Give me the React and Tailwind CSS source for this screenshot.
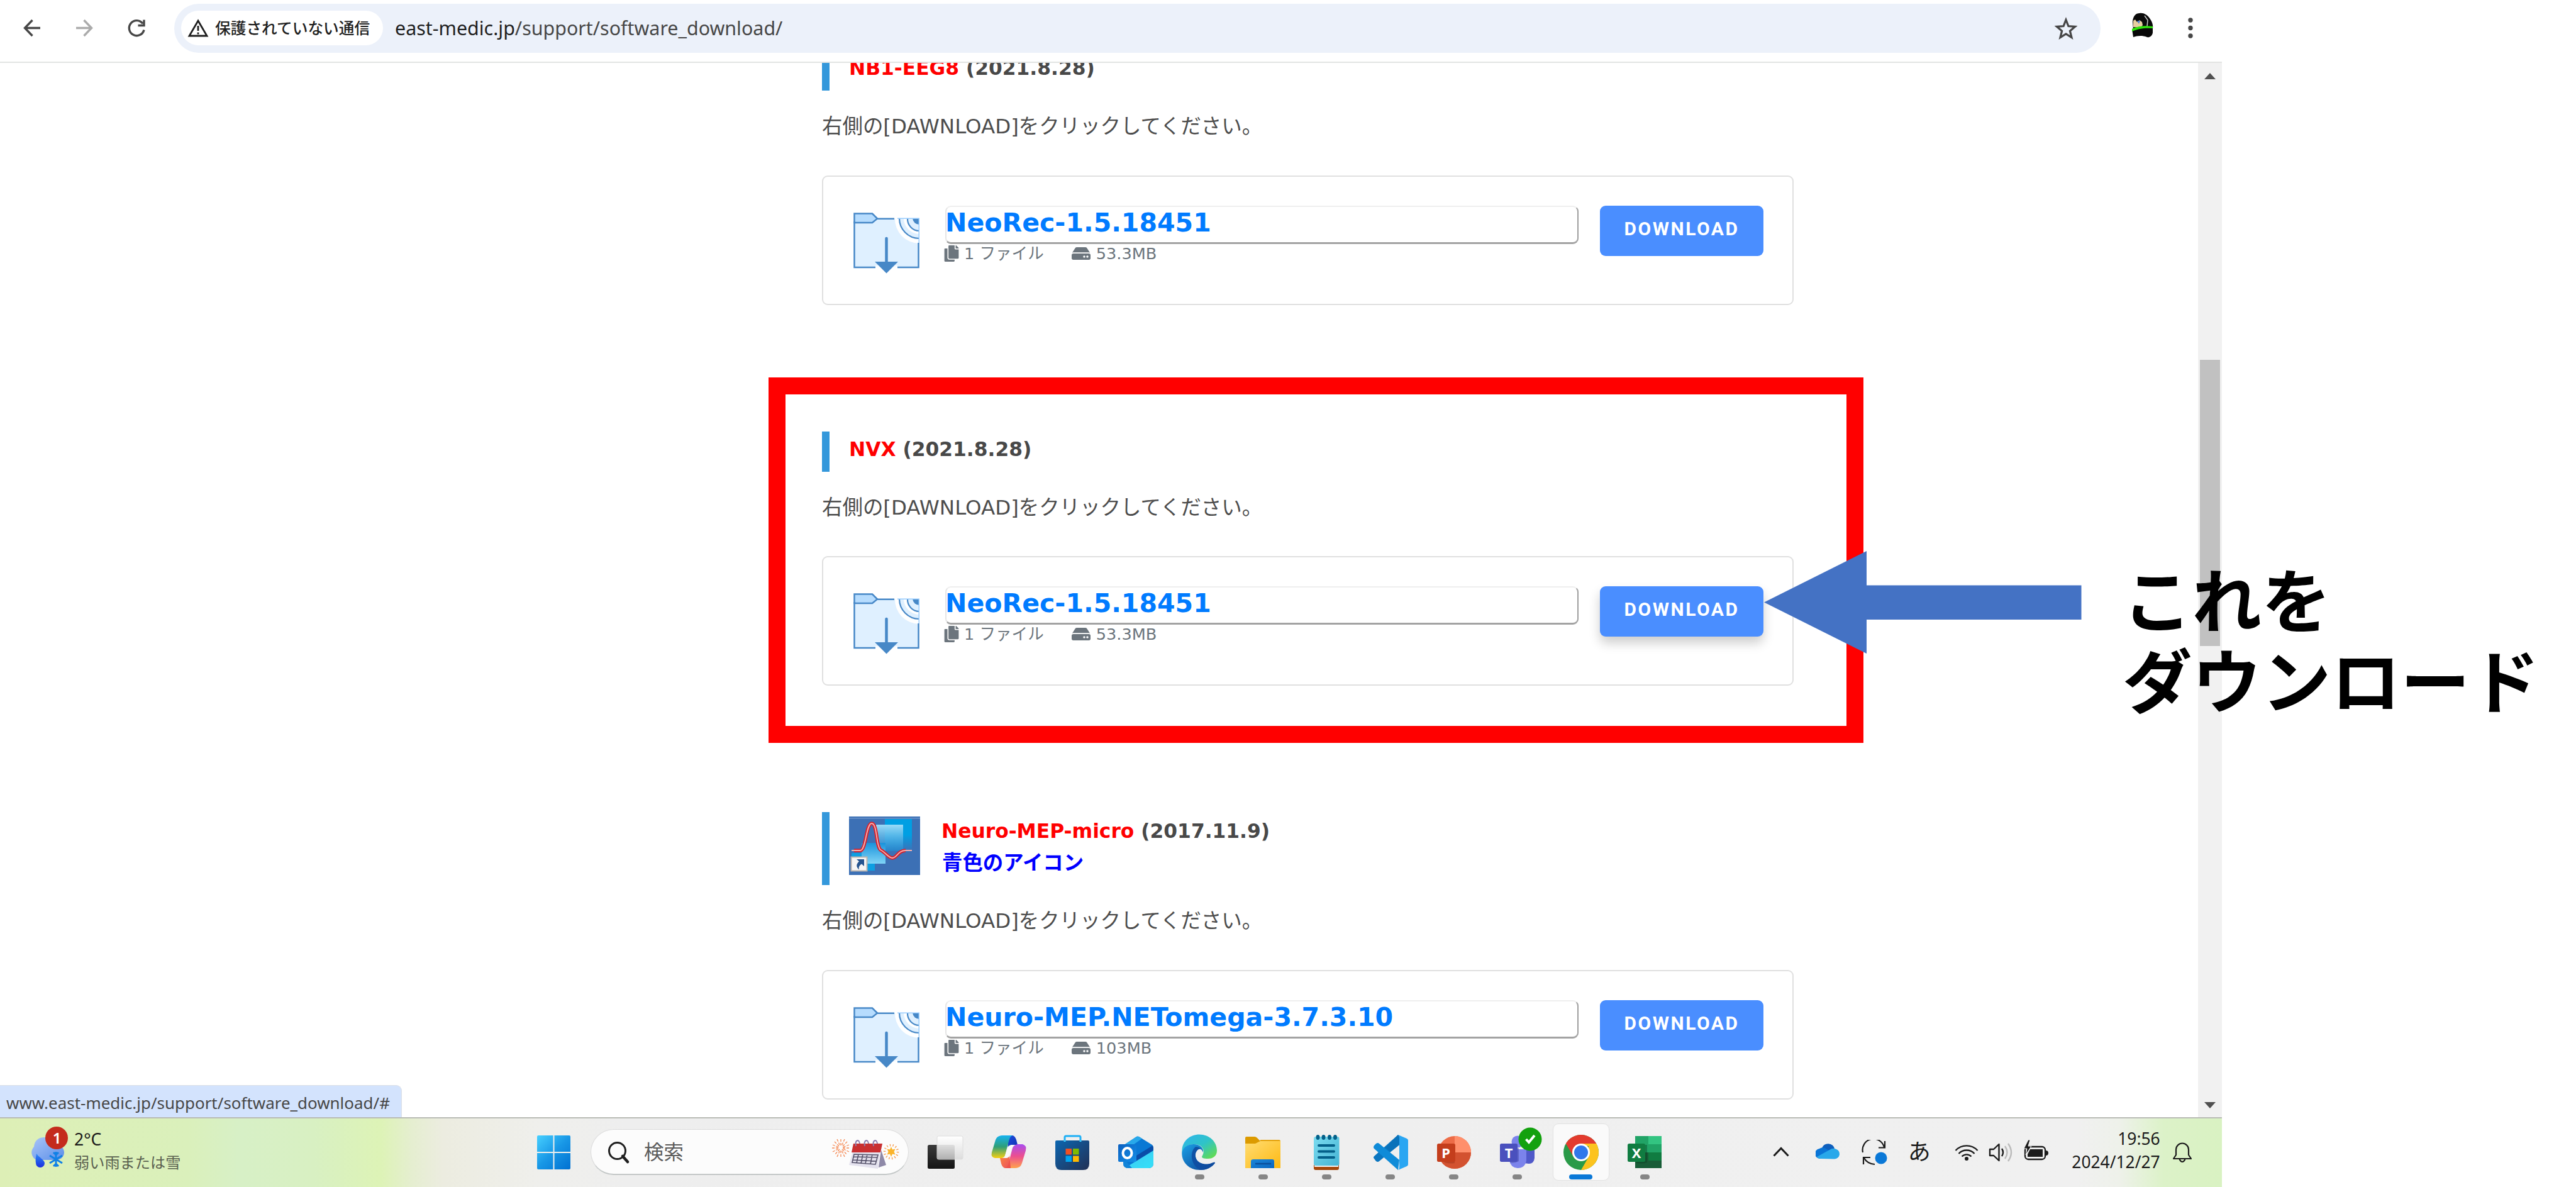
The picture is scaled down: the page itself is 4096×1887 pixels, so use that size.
import React from "react";
import { FaCopy, FaHdd } from "react-icons/fa";

const MEIRYO = "font-['DejaVu_Sans','Noto_Sans_CJK_JP',sans-serif]";
const SEGOE = "font-['Noto_Sans','Noto_Sans_CJK_JP',sans-serif]";

function FolderIcon() {
  return (
    <svg className="mt-[11px] h-[97px] w-[105px] shrink-0" viewBox="0 0 105 97" fill="none">
      <path d="M1.500 9.500H103.500V87H1.500Z" fill="#dff0ff" />
      <path d="M66 8A39 39 0 0 0 105 49V8Z" fill="#fff" />
      <path d="M73 9A32 32 0 0 0 104 41V9Z" fill="#dff0ff" />
      <path d="M80 9A25 25 0 0 0 104 34V9Z" fill="#fff" />
      <path d="M86 9A19 19 0 0 0 104 29V9Z" fill="#dff0ff" />
      <path d="M94 9A11 11 0 0 0 105 19V9Z" fill="#4788c7" />
      <path d="M73 9A32 32 0 0 0 104.500 41M86 9A19 19 0 0 0 104.500 29" stroke="#4788c7" strokeWidth="2.200" />
      <path d="M70 9.200H104.300V48" stroke="#98ccfd" strokeWidth="1.500" />
      <path d="M1.500 1.500H30L38 9.500L30 16H1.500Z" fill="#b6dcfe" stroke="#4788c7" strokeWidth="2.500" />
      <path d="M38 9.800H65M1.500 14V87H35M70 87H103.500V48" stroke="#4788c7" strokeWidth="2.500" />
      <path d="M35 84h35v7H35z" fill="#fff" opacity=".8" />
      <path d="M52.500 41V80" stroke="#4788c7" strokeWidth="4.500" strokeLinecap="round" />
      <path d="M34 78H71L52.500 96.500Z" fill="#4788c7" />
    </svg>
  );
}

function MepIcon() {
  return (
    <svg className="mt-[7px] ml-[31px] h-[93px] w-[113px] shrink-0" viewBox="0 0 113 93">
      <defs>
        <linearGradient id="mepA" x1="0" y1="0" x2="0" y2="1">
          <stop offset="0" stopColor="#9bdcf8" />
          <stop offset="1" stopColor="#1b8fd6" stopOpacity=".6" />
        </linearGradient>
        <linearGradient id="mepB" x1="0" y1="0" x2="0" y2="1">
          <stop offset="0" stopColor="#1a93dc" />
          <stop offset="1" stopColor="#7fd4f6" />
        </linearGradient>
        <linearGradient id="mepC" x1="0" y1="0" x2="0" y2="1">
          <stop offset="0" stopColor="#009fe3" />
          <stop offset=".5" stopColor="#009fe3" />
          <stop offset="1" stopColor="#3b72b8" />
        </linearGradient>
      </defs>
      <rect width="113" height="93" fill="#3c70b5" />
      <rect y="2" width="113" height="1.500" fill="#6d95cc" />
      <rect x="57" y="4" width="43" height="50" fill="url(#mepC)" />
      <rect x="4" y="58" width="37" height="28" fill="#0d9fe2" />
      <rect x="43" y="13" width="43" height="42" fill="url(#mepA)" />
      <rect x="20" y="42" width="38" height="33" fill="url(#mepB)" />
      <path d="M8 54H18C27 54 27 11 36 11C45 11 43 48 50 53C58 57 63 66 69 66C76 66 78 54 90 54" fill="none" stroke="#d6202c" strokeWidth="5.500" />
      <path d="M4 54H18C27 54 27 11 36 11C45 11 43 48 50 53C58 57 63 66 69 66C76 66 78 54 90 54H100" fill="none" stroke="#f3b0b0" strokeWidth="1.800" />
      <rect x="3.500" y="64.500" width="25" height="22" fill="#f6f6f6" stroke="#b9b3ae" strokeWidth="2" />
      <path d="M12 68h12v11l-4-3.500c-4 3-5 5-4 9c-5-4-5-9 0-13Z" fill="#25548f" />
    </svg>
  );
}

function Card({ name, size, hovered }) {
  return (
    <div className="flex h-[206px] w-[1545px] items-start rounded-[9px] border-2 border-[#e0e0e0] pt-[46px] pl-[48px]">
      <FolderIcon />
      <div className="ml-[41px] w-[1007px]">
        <div className="h-[61px] rounded-[9px] border-t-2 border-r-[2px] border-b-[3px] border-l-2 border-t-[#efefef] border-r-[#a0a0a0] border-b-[#a3a3a3] border-l-[#e6e6e6]">
          <div className="-ml-[2px] w-max text-[41.100px] leading-[51px] font-bold whitespace-nowrap text-[#007bff]">{name}</div>
        </div>
        <div className="-mt-[2px] flex items-center text-[25.600px] leading-[34px] text-[#6c757d]">
          <FaCopy className="-ml-[2px] h-[26px] w-[24px]" />
          <span className="ml-[8px] whitespace-nowrap">1 ファイル</span>
          <FaHdd className="ml-[44px] h-[30px] w-[30px]" />
          <span className="ml-[9px]">{size}</span>
        </div>
      </div>
      <div
        className={
          "ml-[34px] h-[80px] w-[260px] rounded-[9px] bg-[#4a8eff] text-center font-['Roboto',sans-serif] text-[30px] leading-[74px] font-bold tracking-[2.500px] text-white " +
          (hovered ? "shadow-[0_10px_18px_rgba(0,0,0,0.2)]" : "")
        }
      >
        DOWNLOAD
      </div>
    </div>
  );
}

function Note() {
  return (
    <div className="h-[134.500px] pt-[25px] text-[32.450px] leading-[64px] whitespace-nowrap text-[#4c4c4c]">
      右側の[DAWNLOAD]をクリックしてください。
    </div>
  );
}

function Heading({ name, date }) {
  return (
    <div className="h-[64px] border-l-[12px] border-[#3498db] pl-[31px] text-[31.300px] leading-[56px] font-bold whitespace-nowrap text-[#484848]">
      <span className="text-[#ff0000]">{name}</span> {date}
    </div>
  );
}

function Toolbar() {
  return (
    <div className="flex h-[100px] w-[3533px] items-start border-b-2 border-[#e2e4e3] bg-white">
      <svg className="mt-[28px] ml-[35px] h-[33px] w-[33px]" viewBox="0 0 33 33" fill="none" stroke="#474747" strokeWidth="3.400">
        <path d="M29 16.500H5M16.500 4L4.500 16.500L16.500 29" />
      </svg>
      <svg className="mt-[28px] ml-[49px] h-[33px] w-[33px]" viewBox="0 0 33 33" fill="none" stroke="#ababab" strokeWidth="3.400">
        <path d="M4 16.500H28M16.500 4L28.500 16.500L16.500 29" />
      </svg>
      <svg className="mt-[28px] ml-[51px] h-[33px] w-[33px]" viewBox="0 0 33 33" fill="none" stroke="#474747" strokeWidth="3.400">
        <path d="M26 9.500A12 12 0 1 0 28 19.500M28 3.500V12.500H18.500" />
      </svg>
      <div className="mt-[6px] ml-[43px] flex h-[78px] w-[3063px] items-start rounded-full bg-[#ecf1fa]">
        <div className="mt-[11px] ml-[11px] flex h-[55px] w-[321px] items-center rounded-full bg-white pl-[10px]">
          <svg className="h-[32px] w-[34px]" viewBox="0 0 34 32" fill="none" stroke="#1f1f1f" strokeWidth="2.800">
            <path d="M17 4L31 28H3Z" />
            <path d="M17 12V20M17 22.500V25.500" />
          </svg>
          <span className={SEGOE + " ml-[10px] text-[24.700px] leading-[40px] font-medium whitespace-nowrap text-[#1f1f1f]"}>保護されていない通信</span>
        </div>
        <div className={SEGOE + " mt-[12px] ml-[19px] text-[30.400px] leading-[54px] whitespace-nowrap text-[#474747]"}>
          <span className="text-[#1f1f1f]">east-medic.jp</span>/support/software_download/
        </div>
        <svg className="mt-[21px] mr-[36px] ml-auto h-[38px] w-[38px]" viewBox="0 0 38 38" fill="none" stroke="#474747" strokeWidth="3.200">
          <path d="M19 4.500L22.900 14.500L33.500 15.300L25.400 22.200L28 32.600L19 27L10 32.600L12.600 22.200L4.500 15.300L15.100 14.500Z" />
        </svg>
      </div>
      <svg className="mt-[20px] ml-[48px] h-[40px] w-[36px]" viewBox="0 0 36 40">
        <path d="M3 14C4 5 8 1 14 1C20 0 26 3 30 9C34 14 36 20 35 26L4 28Z" fill="#0a0a0a" />
        <path d="M4 13L4 23L16 24L19 20L18 15L14 12L10 15L7 11Z" fill="#e8cfa0" />
        <path d="M10 13L13 18L15 13Z" fill="#4a7fd0" />
        <path d="M22 5L27 12L26 22" stroke="#ccc" strokeWidth="1.500" fill="none" />
        <path d="M2 26C12 22 24 22 35 23V32C34 38 29 40 26 39C18 36 10 37 4 39Z" fill="#080808" />
        <path d="M2 26C12 21 24 20.500 35 22V25C24 24 12 25 2 30Z" fill="#2fe30c" />
      </svg>
      <svg className="mt-[26px] ml-[53px] h-[36px] w-[12px]" viewBox="0 0 12 36" fill="#474747">
        <circle cx="6" cy="6" r="3.700" />
        <circle cx="6" cy="18.500" r="3.700" />
        <circle cx="6" cy="31" r="3.700" />
      </svg>
    </div>
  );
}

function TaskCell({ children, state }) {
  return (
    <div className="flex w-[101.150px] flex-col items-center">
      <div className={"mt-[8px] flex h-[91px] w-[90px] flex-col items-center rounded-[9px] " + (state === "active" ? "border border-[#e2e2e2] bg-[#fafafa] " : "border border-transparent")}>
        <svg className="mt-[4px] h-[76px] w-[80px] shrink-0" viewBox="0 0 80 76">{children}</svg>
        {state && <div className={"h-[8px] rounded-full " + (state === "active" ? "w-[37px] bg-[#0a78d7]" : "w-[15px] bg-[#868686]")} />}
      </div>
    </div>
  );
}

function Grad({ id, a, b, c, x2 = 1, y2 = 1 }) {
  return (
    <linearGradient id={id} x1="0" y1="0" x2={x2} y2={y2}>
      <stop offset="0" stopColor={a} />
      {c && <stop offset=".5" stopColor={c} />}
      <stop offset="1" stopColor={b} />
    </linearGradient>
  );
}

function Taskbar() {
  return (
    <div className={SEGOE + " flex h-[111px] w-[3533px] items-start border-t-2 border-[#b9bcb6] bg-[linear-gradient(90deg,#ddefb6_0px,#daf0bb_300px,#d7f0c6_380px,#d8f0c2_500px,#ddf3b6_605px,#e5eed0_655px,#ecece0_705px,#efefec_860px,#eeeeee_1000px,#f0f0f0_3300px,#eef1ea_3370px,#dcf2c8_3440px,#d9f2c2_3533px)]"}>
      <svg className="mt-[10px] ml-[44px] h-[70px] w-[66px]" viewBox="0 0 66 70">
        <defs>
          <Grad id="cl" a="#a9c6f8" b="#5c8ee8" />
          <Grad id="dr" a="#2b8cf5" b="#1c2fe0" x2={0} />
        </defs>
        <path d="M14 56A13 13 0 0 1 10 35C11 24 18 20 27 20C38 20 42 26 43 31C52 31 58 37 58 44C58 51 52 56 46 56Z" fill="url(#cl)" />
        <path d="M14 46C18 52 27 56 27 61A7 7 0 0 1 13 61C12 56 13 52 14 46Z" fill="url(#dr)" />
        <path d="M45 43V67M35 49L55 61M55 49L35 61M41 44l4 4l4-4M41 66l4-4l4 4" stroke="#1181e6" strokeWidth="3" fill="none" />
        <circle cx="46" cy="21" r="18" fill="#c42b1c" />
        <text x="46.500" y="30" fontSize="24" fontWeight="600" fill="#fff" textAnchor="middle">1</text>
      </svg>
      <div className="mt-[13px] ml-[8px] w-[200px] leading-[40px] whitespace-nowrap">
        <div className="h-[40px] text-[26.500px] text-[#1b1b1b]">2°C</div>
        <div className="text-[24.200px] leading-[34px] text-[#5a6150]">弱い雨または雪</div>
      </div>
      <svg className="mt-[27px] ml-[536px] h-[54px] w-[53px]" viewBox="0 0 53 54">
        <defs>
          <linearGradient id="win" gradientUnits="userSpaceOnUse" x1="0" y1="0" x2="53" y2="54">
            <stop offset="0" stopColor="#47d0ff" />
            <stop offset=".5" stopColor="#1897e6" />
            <stop offset="1" stopColor="#0070d1" />
          </linearGradient>
        </defs>
        <g fill="url(#win)">
          <path d="M2 0H25.500V26H0V2Q0 0 2 0Z" />
          <path d="M27.500 0H51Q53 0 53 2V26H27.500Z" />
          <path d="M0 28H25.500V54H2Q0 54 0 52Z" />
          <path d="M27.500 28H53V52Q53 54 51 54H27.500Z" />
        </g>
      </svg>
      <div className="mt-[17px] ml-[32px] flex h-[73px] w-[506px] items-start rounded-full border border-b-2 border-[#dcdcdc] border-b-[#c4c8c8] bg-[#fcfcfc]">
        <svg className="mt-[18px] ml-[26px] h-[37px] w-[36px]" viewBox="0 0 36 37" fill="none" stroke="#1f1f1f">
          <circle cx="15.500" cy="15.500" r="13" strokeWidth="3" />
          <path d="M24 24L32 33" strokeWidth="4.500" strokeLinecap="round" />
        </svg>
        <span className="mt-[12px] ml-[22px] text-[31.500px] leading-[46px] text-[#5c5c5c]">検索</span>
        <svg className="mt-[14px] ml-auto mr-[10px] h-[52px] w-[115px]" viewBox="0 0 115 52" fill="none">
          <g stroke="#f58a55" strokeWidth="1.300" strokeDasharray="4 2">
            <path d="M18 1V11M18 19V30M4 15H15M21 15H32M8 5L16 13M20 17L28 26M28 5L20 13M16 17L8 26M12 1L17 12M24 1L19 12M12 29L17 18M24 29L19 18M5 10L15 14M31 10L21 14M5 21L15 16M31 21L21 16" />
          </g>
          <path d="M82 18L90 42L78 46Z" fill="#8f8aa8" />
          <path d="M38 8H84L80 24L77 48L31 42L36 24Z" fill="#e4e2ee" />
          <path d="M38 8H84L81 22H35Z" fill="#c92f31" />
          <path d="M39 25L77 26L73 41L36 38ZM38 29L76 30M37 34L75 36M46 25L43 39M53 25L50 40M60 25L57 40M68 25L65 41" stroke="#55526a" strokeWidth="1.600" />
          <path d="M42 12C40 2 47 0 48 8M56 12C54 2 61 0 62 8M70 12C68 2 75 0 76 8" stroke="#8d7fb0" strokeWidth="2" />
          <circle cx="98" cy="21" r="10.500" stroke="#f79a4a" strokeWidth="3.500" strokeDasharray="1.300 3.400" />
          <path d="M98 13L100 17.500L104.500 16.500L102.500 21L104.500 25.500L100 24.500L98 29L96 24.500L91.500 25.500L93.500 21L91.500 16.500L96 17.500Z" fill="#fbb42b" />
        </svg>
      </div>
      <div className="ml-[7px] flex">
        <TaskCell>
          <defs><Grad id="tv1" a="#3a3a3a" b="#141414" x2={0} /><Grad id="tv2" a="#ffffff" b="#dcdcdc" x2={0} /><Grad id="tv3" a="#dedede" b="#b0b0b0" x2={0} /></defs>
          <rect x="12" y="29" width="43" height="38" rx="2.500" fill="url(#tv1)" />
          <rect x="27" y="15" width="41" height="37" rx="2.500" fill="url(#tv2)" stroke="#dedede" />
          <path d="M27 29H52Q55 29 55 31V52H29Q27 52 27 50Z" fill="url(#tv3)" />
        </TaskCell>
        <TaskCell>
          <defs>
            <Grad id="cp1" a="#16b2f0" b="#f7cf10" c="#2f9f78" x2={0} />
            <Grad id="cp2" a="#a94df0" b="#ffa34d" c="#ec4f8f" x2={0} />
            <Grad id="cp3" a="#1d4fe0" b="#0f2fb0" />
            <Grad id="cp4" a="#ff7a2e" b="#e8404e" />
          </defs>
          <path d="M37 14H46Q50 15 52 21L54 29H44Q40 31 39 35Z" fill="url(#cp3)" />
          <path d="M25 15Q27 14 30 14H46Q42 15 40 23L34 46Q32 50 28 50H18Q11 49 13 41L19 21Q21 16 25 15Z" fill="url(#cp1)" />
          <path d="M55 65Q53 66 50 66H34Q38 65 40 57L46 34Q48 29 54 28H62Q69 30 67 38L61 58Q59 64 55 65Z" fill="url(#cp2)" />
          <path d="M43 66H34Q30 65 28 59L26 50H36Q40 49 41 45Z" fill="url(#cp4)" opacity=".9" />
          <path d="M44 29H49Q46 31 45 35L41 47Q40 50 34 50Q33 50 34 46L38 34Q39 30 44 29Z" fill="#fafafa" />
        </TaskCell>
        <TaskCell>
          <defs><Grad id="st" a="#0c66b0" b="#223055" /></defs>
          <path d="M28 24V17Q28 15 30 15H51Q53 15 53 17V24" fill="none" stroke="#1fb0f5" strokeWidth="3" />
          <path d="M15 22H65Q67 22 67 24V59Q67 69 57 69H23Q13 69 13 59V24Q13 22 15 22Z" fill="url(#st)" />
          <path d="M28 22V24M53 22V24" stroke="#3fd0ff" strokeWidth="3" />
          <path d="M29.500 35h9.500v9.500h-9.500z" fill="#f25022" /><path d="M41 35h9.500v9.500H41z" fill="#7fba00" />
          <path d="M29.500 46.500h9.500V56h-9.500z" fill="#00a4ef" /><path d="M41 46.500h9.500V56H41z" fill="#ffb900" />
        </TaskCell>
        <TaskCell>
          <defs><Grad id="ol" a="#0a5fc0" b="#1590e8" /><Grad id="ol2" a="#3cc9f2" b="#35e0f8" /></defs>
          <path d="M20 30L41 16Q43 15 45 16L66 29Q68 31 68 34V58Q68 66 60 66H28Q20 66 20 58Z" fill="#0a78d4" />
          <path d="M20 30L41 16Q43 15 45 16L50 19L20 40Z" fill="#28a8ea" />
          <path d="M41 46L67 30Q70 38 64 43L41 60Z" fill="#0a4da8" />
          <path d="M68 38V58Q68 66 60 66H28Q26 66 24 65Z" fill="url(#ol2)" />
          <path d="M20 50L34 66H28Q20 66 20 58Z" fill="#1284d8" />
          <rect x="12" y="28" width="29" height="28" rx="2" fill="url(#ol)" />
          <ellipse cx="26.500" cy="42" rx="7" ry="8" fill="none" stroke="#fff" strokeWidth="4" />
        </TaskCell>
        <TaskCell state="open">
          <defs><Grad id="eg1" a="#2fb4ee" b="#6be03c" c="#2fc3c8" /><Grad id="eg2" a="#1ba0e6" b="#0d3f92" /><Grad id="eg3" a="#0e53a8" b="#0f4a9c" /></defs>
          <path d="M12.500 38C13 22 26 12.500 40 12.500C56 12.500 68 24 68 38C68 48 60 51 54 51C47 51 42 50 45 46C50 37 44 28 32 28C22 28 15 33 12.500 42Z" fill="url(#eg1)" />
          <path d="M12.300 42C13 34 21 28 31 28C42 28 47 35 46 41C44 34 36 34 34 42C32 54 42 60 52 60C58 60 62 57 64 57C65 57 65 58 64 59C58 66 50 69 41 69C23 69 12 56 12.300 42Z" fill="url(#eg2)" />
          <path d="M34 32C24 40 26 62 42 69C52 69 60 64 64 59C66 56 64 56 62 57C52 62 36 60 34 48C33 42 36 36 42 35C40 33 37 32 34 32Z" fill="url(#eg3)" />
        </TaskCell>
        <TaskCell state="open">
          <defs><Grad id="fe" a="#ffdc72" b="#fdb912" /><Grad id="fe2" a="#1b86d8" b="#0a66c0" /></defs>
          <path d="M12 18Q12 16 14 16H27Q29 16 31 18L36 23V28H12Z" fill="#dc9a00" />
          <path d="M36 21H66Q68 21 68 24H35Z" fill="#e4a310" />
          <path d="M12 27H28L36 23H68V66H12Z" fill="url(#fe)" />
          <path d="M21 66V55Q21 52 25 52H55Q58 52 58 55V66Z" fill="url(#fe2)" />
          <path d="M29 59H52" stroke="#0a4f9c" strokeWidth="2.500" strokeLinecap="round" />
        </TaskCell>
        <TaskCell state="open">
          <defs><Grad id="np" a="#7bdcf0" b="#45b4d4" /></defs>
          <path d="M20 61H60V66Q60 69 57 69H23Q20 69 20 66Z" fill="#a5480c" />
          <path d="M21 59H59V64H21Z" fill="#f2f2f2" />
          <rect x="20" y="16" width="40.500" height="46" rx="3" fill="url(#np)" />
          <path d="M28 30H52M28 39.500H52M28 49H52" stroke="#046089" strokeWidth="4" strokeLinecap="round" />
          <g fill="#046089"><ellipse cx="26.500" cy="17" rx="3" ry="4" /><ellipse cx="35.500" cy="17" rx="3" ry="4" /><ellipse cx="45" cy="17" rx="3" ry="4" /><ellipse cx="54" cy="17" rx="3" ry="4" /></g>
        </TaskCell>
        <TaskCell state="open">
          <path d="M52 13L54 29L22 55Q20 57 17 55L14 51Q12 49 14 47Z" fill="#0b76c0" />
          <path d="M52 69L54 53L22 27Q20 25 17 27L14 30Q12 33 14 35Z" fill="#0f8bd8" />
          <path d="M52 13L66 19Q68 20 68 22V60Q68 62 66 63L52 69Q54 68 54 64V17Q54 14 52 13Z" fill="#2aa6f2" />
          <path d="M52 13Q54 14 54 17V29L40 40L33 33Z" fill="#0972ba" />
        </TaskCell>
        <TaskCell state="open">
          <circle cx="41" cy="41" r="26" fill="#ed6c47" />
          <path d="M41 15A26 26 0 0 1 67 41H41Z" fill="#ff8f6b" />
          <path d="M67 41A26 26 0 0 1 15 41Z" fill="#d35230" />
          <path d="M17 29H41V58Q28 60 20 54Z" fill="#9a3018" opacity=".45" />
          <rect x="13" y="27" width="29" height="29" rx="2.500" fill="#c43e1c" />
          <text x="27" y="49.500" fontSize="22" fontWeight="700" fill="#fff" textAnchor="middle">P</text>
        </TaskCell>
        <TaskCell state="open">
          <circle cx="55" cy="30" r="7" fill="#5059c9" /><circle cx="40" cy="24" r="9.500" fill="#7b83eb" />
          <path d="M50 35H67V50Q66 59 58 59L50 58Z" fill="#5059c9" />
          <path d="M27 36H54V54Q52 66 40 66Q29 65 27 54Z" fill="#7b83eb" />
          <path d="M27 34H42V55Q34 59 28 57Z" fill="#3c4299" opacity=".45" />
          <rect x="12" y="27" width="28" height="29" rx="2.500" fill="#4a50bd" />
          <text x="26" y="49.500" fontSize="22" fontWeight="700" fill="#fff" textAnchor="middle">T</text>
          <circle cx="60" cy="20" r="18.500" fill="#13a10e" />
          <path d="M53.500 20L58 25L67 14" fill="none" stroke="#fff" strokeWidth="4" />
        </TaskCell>
        <TaskCell state="active">
          <circle cx="40" cy="41" r="28" fill="#2a9a48" />
          <path d="M15.800 27A28 28 0 0 1 64.200 27H40L28 48Z" fill="#e33b2e" />
          <path d="M64.200 27A28 28 0 0 1 40 69L52.100 48L52 27Z" fill="#fcc31e" />
          <path d="M40 27H64.200A28 28 0 0 1 66 31L46 31Z" fill="#fcc31e" />
          <circle cx="40" cy="41" r="14" fill="#fff" />
          <circle cx="40" cy="41" r="11" fill="#3078ea" />
        </TaskCell>
        <TaskCell state="open">
          <path d="M25 15H67V66H25Z" fill="#21a366" />
          <path d="M46 15H67V28H46Z" fill="#33c481" /><path d="M25 41H46V54H25Z" fill="#185c37" />
          <path d="M46 41H67V54H46Z" fill="#107c41" /><path d="M25 54H67V66H25Z" fill="#185c37" />
          <path d="M25 29H44V57Q34 60 25 57Z" fill="#0a3d20" opacity=".4" />
          <rect x="13" y="27" width="28" height="29" rx="2.500" fill="#107c41" />
          <text x="27" y="49.500" fontSize="22" fontWeight="700" fill="#fff" textAnchor="middle">X</text>
        </TaskCell>
      </div>
      <svg className="mt-[44px] ml-[152px] h-[18px] w-[28px]" viewBox="0 0 28 18" fill="none" stroke="#1b1b1b" strokeWidth="3"><path d="M2.500 15.500L14 3.500L25.500 15.500" /></svg>
      <svg className="mt-[39px] ml-[41px] h-[26px] w-[38px]" viewBox="0 0 38 26">
        <path d="M10 8A10.500 10.500 0 0 1 30 9L20 20Z" fill="#0f5fbd" />
        <path d="M8 25A8 8 0 0 1 6 9Q12 5 18 10L30 17L20 25Z" fill="#0a74d6" />
        <path d="M8 25Q4 25 2 22L22 11Q27 7 33 10Q38 12 38 18Q37 25 30 25.500Z" fill="#28a8ea" />
      </svg>
      <svg className="mt-[34px] ml-[35px] h-[41px] w-[42px]" viewBox="0 0 42 41" fill="none" stroke="#1b1b1b" strokeWidth="2.200">
        <path d="M2 20A17 17 0 0 1 36 12M37 2V12.500H27M3 39V28H14M4 29Q9 38 21 39" />
        <circle cx="31" cy="29" r="9.500" fill="#0a78d7" stroke="none" />
      </svg>
      <span className="mt-[30px] ml-[32px] w-[36px] text-[36px] leading-[46px] text-[#1b1b1b]">あ</span>
      <svg className="mt-[38px] ml-[38px] h-[30px] w-[38px]" viewBox="0 0 38 30" fill="none" stroke="#1b1b1b" strokeWidth="2.400">
        <path d="M1.500 13A24 24 0 0 1 36.500 13M6.500 18A17 17 0 0 1 31.500 18M11.500 22.500A10.500 10.500 0 0 1 26.500 22.500" />
        <circle cx="19" cy="26" r="3" fill="#1b1b1b" stroke="none" />
      </svg>
      <svg className="mt-[38px] ml-[16px] h-[32px] w-[40px]" viewBox="0 0 40 32" fill="none" stroke="#1b1b1b" strokeWidth="2.400">
        <path d="M2 11H8L16.500 3V29L8 21H2Z" strokeLinejoin="round" />
        <path d="M21 10Q25 16 21 22" />
        <path d="M26 6Q33 16 26 26M31 2Q41 16 31 30" stroke="#bbb" />
      </svg>
      <svg className="mt-[34px] ml-[16px] h-[34px] w-[40px]" viewBox="0 0 40 34">
        <rect x="2" y="11" width="32" height="20" rx="5" fill="none" stroke="#1b1b1b" strokeWidth="2.300" />
        <path d="M10 15H30V27H6V23Z" fill="#1b1b1b" /><path d="M35 17Q39 17 39 21Q39 25 35 25Z" fill="#1b1b1b" />
        <path d="M7 0L0 14H5L3 24L12 10H7L10 0Z" fill="#1b1b1b" stroke="#f0f0f0" />
      </svg>
      <div className="mt-[14px] ml-[26px] w-[151px] text-right text-[26.400px] leading-[37px] text-[#1b1b1b]">
        <div>19:56</div>
        <div>2024/12/27</div>
      </div>
      <svg className="mt-[36px] ml-[19px] h-[36px] w-[32px]" viewBox="0 0 32 36" fill="none" stroke="#1b1b1b" strokeWidth="2.200">
        <path d="M6 13.500A10 10 0 0 1 26 13.500V22L30 28H2L6 22ZM11.500 29Q16 37 20.500 29" strokeLinejoin="round" />
      </svg>
    </div>
  );
}

export default function App() {
  return (
    <div className={MEIRYO + " relative h-[1887px] w-[4096px] overflow-hidden bg-white"}>
      <Toolbar />
      <div className="flex h-[1676px] w-[3533px] overflow-hidden">
        <div className="-mt-[20px] w-[3495px] pl-[1307px]">
          <Heading name="NB1-EEG8" date="(2021.8.28)" />
          <Note />
          <Card name="NeoRec-1.5.18451" size="53.3MB" />
          <div className="h-[201px]" />
          <Heading name="NVX" date="(2021.8.28)" />
          <Note />
          <Card name="NeoRec-1.5.18451" size="53.3MB" hovered />
          <div className="h-[201px]" />
          <div className="flex h-[116px] border-l-[12px] border-[#3498db] text-[31.300px] font-bold">
            <MepIcon />
            <div className="pt-[5px] pl-[34px] leading-[51px] whitespace-nowrap text-[#484848]">
              <div><span className="text-[#ff0000]">Neuro-MEP-micro</span> (2017.11.9)</div>
              <div className="ml-[1px] text-[32.400px] text-[#0000ff]">青色のアイコン</div>
            </div>
          </div>
          <Note />
          <Card name="Neuro-MEP.NETomega-3.7.3.10" size="103MB" />
        </div>
        <div className="flex w-[38px] flex-col items-center bg-[#f1f1f1]">
          <svg className="mt-[15px] h-[12px] w-[18px]" viewBox="0 0 18 12"><path d="M0 11H18L9 1Z" fill="#505050" /></svg>
          <div className="mt-[445px] h-[455px] w-[32px] bg-[#c1c1c1]" />
          <svg className="mt-auto mb-[13px] h-[12px] w-[18px]" viewBox="0 0 18 12"><path d="M0 1H18L9 11Z" fill="#505050" /></svg>
        </div>
      </div>
      <Taskbar />
      <div className={SEGOE + " absolute top-[1725px] left-0 h-[51px] w-[639px] rounded-tr-[9px] border-t border-r border-[#dcdfe6] bg-[#d3e3fd] pl-[10px] text-[25.950px] leading-[54px] whitespace-nowrap text-[#474747]"}>
        www.east-medic.jp/support/software_download/#
      </div>
      <div className="absolute top-[600px] left-[1222px] h-[581px] w-[1741px] border-[27px] border-[#ff0000]" />
      <svg className="absolute top-[876px] left-[2805px] h-[163px] w-[505px]" viewBox="0 0 505 163">
        <path d="M0 81.500L163 0V54.500H504.500V109H163V163Z" fill="#4472c4" />
      </svg>
      <div className="absolute top-[885px] left-[3375px] font-['Noto_Sans_CJK_JP',sans-serif] text-[110.500px] leading-[128px] font-bold whitespace-nowrap text-black">
        <div>これを</div>
        <div>ダウンロード</div>
      </div>
    </div>
  );
}
